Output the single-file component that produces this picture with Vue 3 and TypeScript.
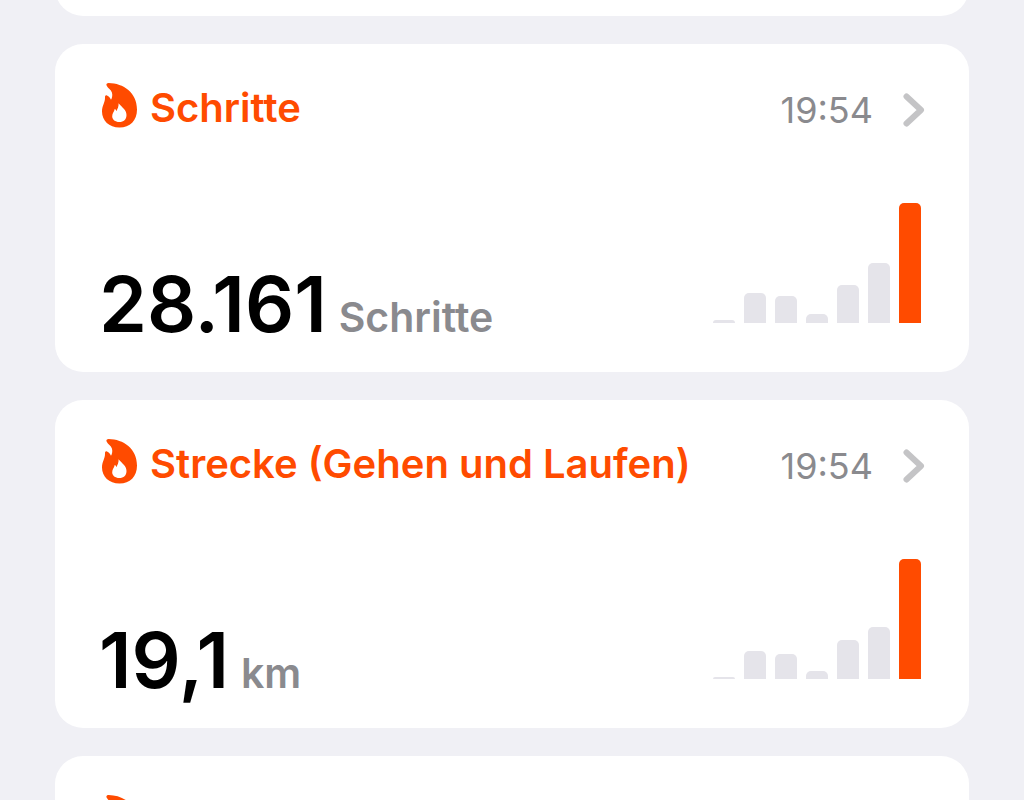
<script setup lang="ts">
interface Metric {
  title: string
  time: string
  value: string
  unit: string
  bars: number[]
}

const metrics: Metric[] = [
  {
    title: 'Schritte',
    time: '19:54',
    value: '28.161',
    unit: 'Schritte',
    bars: [3, 30, 27, 9, 38, 60, 120],
  },
  {
    title: 'Strecke (Gehen und Laufen)',
    time: '19:54',
    value: '19,1',
    unit: 'km',
    bars: [2, 28, 25, 8, 39, 52, 120],
  },
]

const flame =
  'M4.600 2.600C3.900 1 5 0 6.600 0 21.500.3 35 9.500 35 26.500 35 37.500 28 44.500 17.500 44.500 7 44.500 0 37.600 0 28.500 0 22.500 3.200 19.500 3 14.500 2.900 12.700 3.800 11.900 5 12.500 6.900 13.500 8.300 15 9 16.800 10.200 14.500 10.700 12 9.900 9.400 9 6.500 6 5.500 4.600 2.600ZM16.600 20.200C16.900 23.500 15.300 26 14.400 28.200 14.100 27 13.600 26.300 12.700 26 12.200 28.800 10.200 30.200 10.200 33.200 10.200 36.600 13.200 39 17.300 39 21.600 39 24.500 36.400 24.500 32 24.500 26.700 19.900 24.400 16.600 20.200Z'
</script>

<template>
  <main class="feed">
    <section class="card previous"></section>

    <article v-for="metric in metrics" :key="metric.title" class="card">
      <a class="head" href="#">
        <svg class="flame" viewBox="0 0 35 45" aria-hidden="true">
          <path :d="flame" fill-rule="evenodd" />
        </svg>
        <h2 class="title">{{ metric.title }}</h2>
        <time class="time">{{ metric.time }}</time>
        <svg class="chevron" viewBox="0 0 22 34" aria-hidden="true">
          <path d="M3.500 3.500 18 17 3.500 30.500" />
        </svg>
      </a>
      <div class="body">
        <p class="reading">
          <span class="value">{{ metric.value }}</span>
          <span class="unit">{{ metric.unit }}</span>
        </p>
        <div class="chart">
          <span
            v-for="(bar, i) in metric.bars"
            :key="i"
            class="bar"
            :class="{ today: i === metric.bars.length - 1 }"
            :style="{ height: bar + 'px' }"
          ></span>
        </div>
      </div>
    </article>

    <section class="card">
      <div class="head">
        <svg class="flame" viewBox="0 0 35 45" aria-hidden="true">
          <path :d="flame" fill-rule="evenodd" />
        </svg>
      </div>
    </section>
  </main>
</template>

<style>
body {
  background: #f0f0f5;
}
</style>

<style scoped>
.feed {
  box-sizing: border-box;
  height: 100vh;
  overflow: hidden;
  padding: 0 55px;
  display: flex;
  flex-direction: column;
  gap: 28px;
  background: #f0f0f5;
  font-family: Inter, "Liberation Sans", sans-serif;
}

.card {
  flex: none;
  box-sizing: border-box;
  min-height: 328px;
  padding: 36px 48px 30px 44px;
  border-radius: 28px;
  background: #fff;
  display: flex;
  flex-direction: column;
  justify-content: space-between;
}

.previous {
  margin-top: -312px;
}

.head {
  display: flex;
  align-items: center;
  height: 56px;
  color: #ff4b00;
  text-decoration: none;
}

.flame {
  flex: none;
  width: 35px;
  height: 45px;
  margin-left: 3px;
  margin-right: 13px;
  margin-bottom: 6px;
  fill: #ff4b00;
}

.title {
  flex: 1;
  margin: 0;
  font-size: 40px;
  line-height: 56px;
  font-weight: 600;
  white-space: nowrap;
}

.time {
  margin-top: 4px;
  font-size: 36px;
  line-height: 56px;
  color: #8a8a8e;
}

.chevron {
  flex: none;
  width: 22px;
  height: 34px;
  margin-top: 4px;
  margin-left: 30px;
  margin-right: -4px;
  fill: none;
  stroke: #c4c4c6;
  stroke-width: 6;
  stroke-linecap: round;
  stroke-linejoin: round;
}

.body {
  display: flex;
  align-items: flex-end;
  justify-content: space-between;
}

.reading {
  margin: 0;
  display: flex;
  align-items: baseline;
  gap: 12px;
  white-space: nowrap;
}

.value {
  font-size: 77px;
  line-height: 72px;
  font-weight: 600;
  color: #000;
}

.unit {
  font-size: 41px;
  font-weight: 600;
  color: #8a8a8e;
}

.chart {
  display: flex;
  align-items: flex-end;
  gap: 9px;
  height: 120px;
  padding-bottom: 19px;
}

.bar {
  width: 22px;
  border-radius: 5px 5px 0 0;
  background: #e5e4ea;
}

.today {
  background: #ff4b00;
}
</style>
